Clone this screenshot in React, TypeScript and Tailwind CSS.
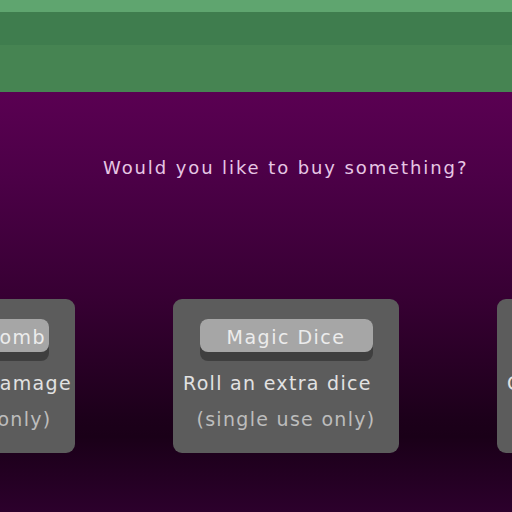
const items = [
  { name: "Throwing Bomb", desc: "Deal heavy damage" },
  { name: "Magic Dice", desc: "Roll an extra dice" },
  { name: "Lucky Charm", desc: "Gain an extra turn" },
];

function ShopCard({ name, desc }: { name: string; desc: string }) {
  return (
    <div className="w-[226px] h-[154px] shrink-0 bg-[#5c5c5c] rounded-[9px] flex flex-col items-center pt-[20px]">
      <div className="w-[173px] h-[42px] rounded-[8px] bg-[#3f3f3f]">
        <div className="h-[33px] pt-[4px] rounded-[8px] bg-[#a6a6a6] flex items-center justify-center text-[#ececec] text-[19px] tracking-[1.5px] whitespace-nowrap">
          {name}
        </div>
      </div>
      <div className="self-start pl-[10px] mt-[10px] text-[#e2e2e2] text-[19px] leading-[24px] tracking-[1.3px] whitespace-nowrap">
        {desc}
      </div>
      <div className="mt-[12px] text-[#bdbdbd] text-[19px] leading-[24px] tracking-[1.3px] whitespace-nowrap">
        (single use only)
      </div>
    </div>
  );
}

export default function App() {
  return (
    <div
      className="w-[512px] h-[512px] overflow-hidden flex flex-col"
      style={{ fontFamily: '"DejaVu Sans", sans-serif' }}
    >
      <div className="h-[92px] shrink-0 flex flex-col">
        <div className="h-[12px] bg-[#5fa56f]" />
        <div className="h-[33px] bg-[#3f7d4e]" />
        <div className="flex-1 bg-[#468452]" />
      </div>
      <div className="flex-1 flex flex-col bg-[linear-gradient(to_bottom,#5a0052_0%,#4c0047_20%,#360032_50%,#1c001a_78%,#1a0018_82%,#2c002c_100%)]">
        <div className="mt-[63px] pl-[103px] text-[#e6c6e4] text-[18px] leading-[26px] tracking-[1.9px] whitespace-nowrap">
          Would you like to buy something?
        </div>
        <div className="mt-[118px] ml-[-151px] flex gap-[98px]">
          {items.map((it) => (
            <ShopCard key={it.name} name={it.name} desc={it.desc} />
          ))}
        </div>
      </div>
    </div>
  );
}
